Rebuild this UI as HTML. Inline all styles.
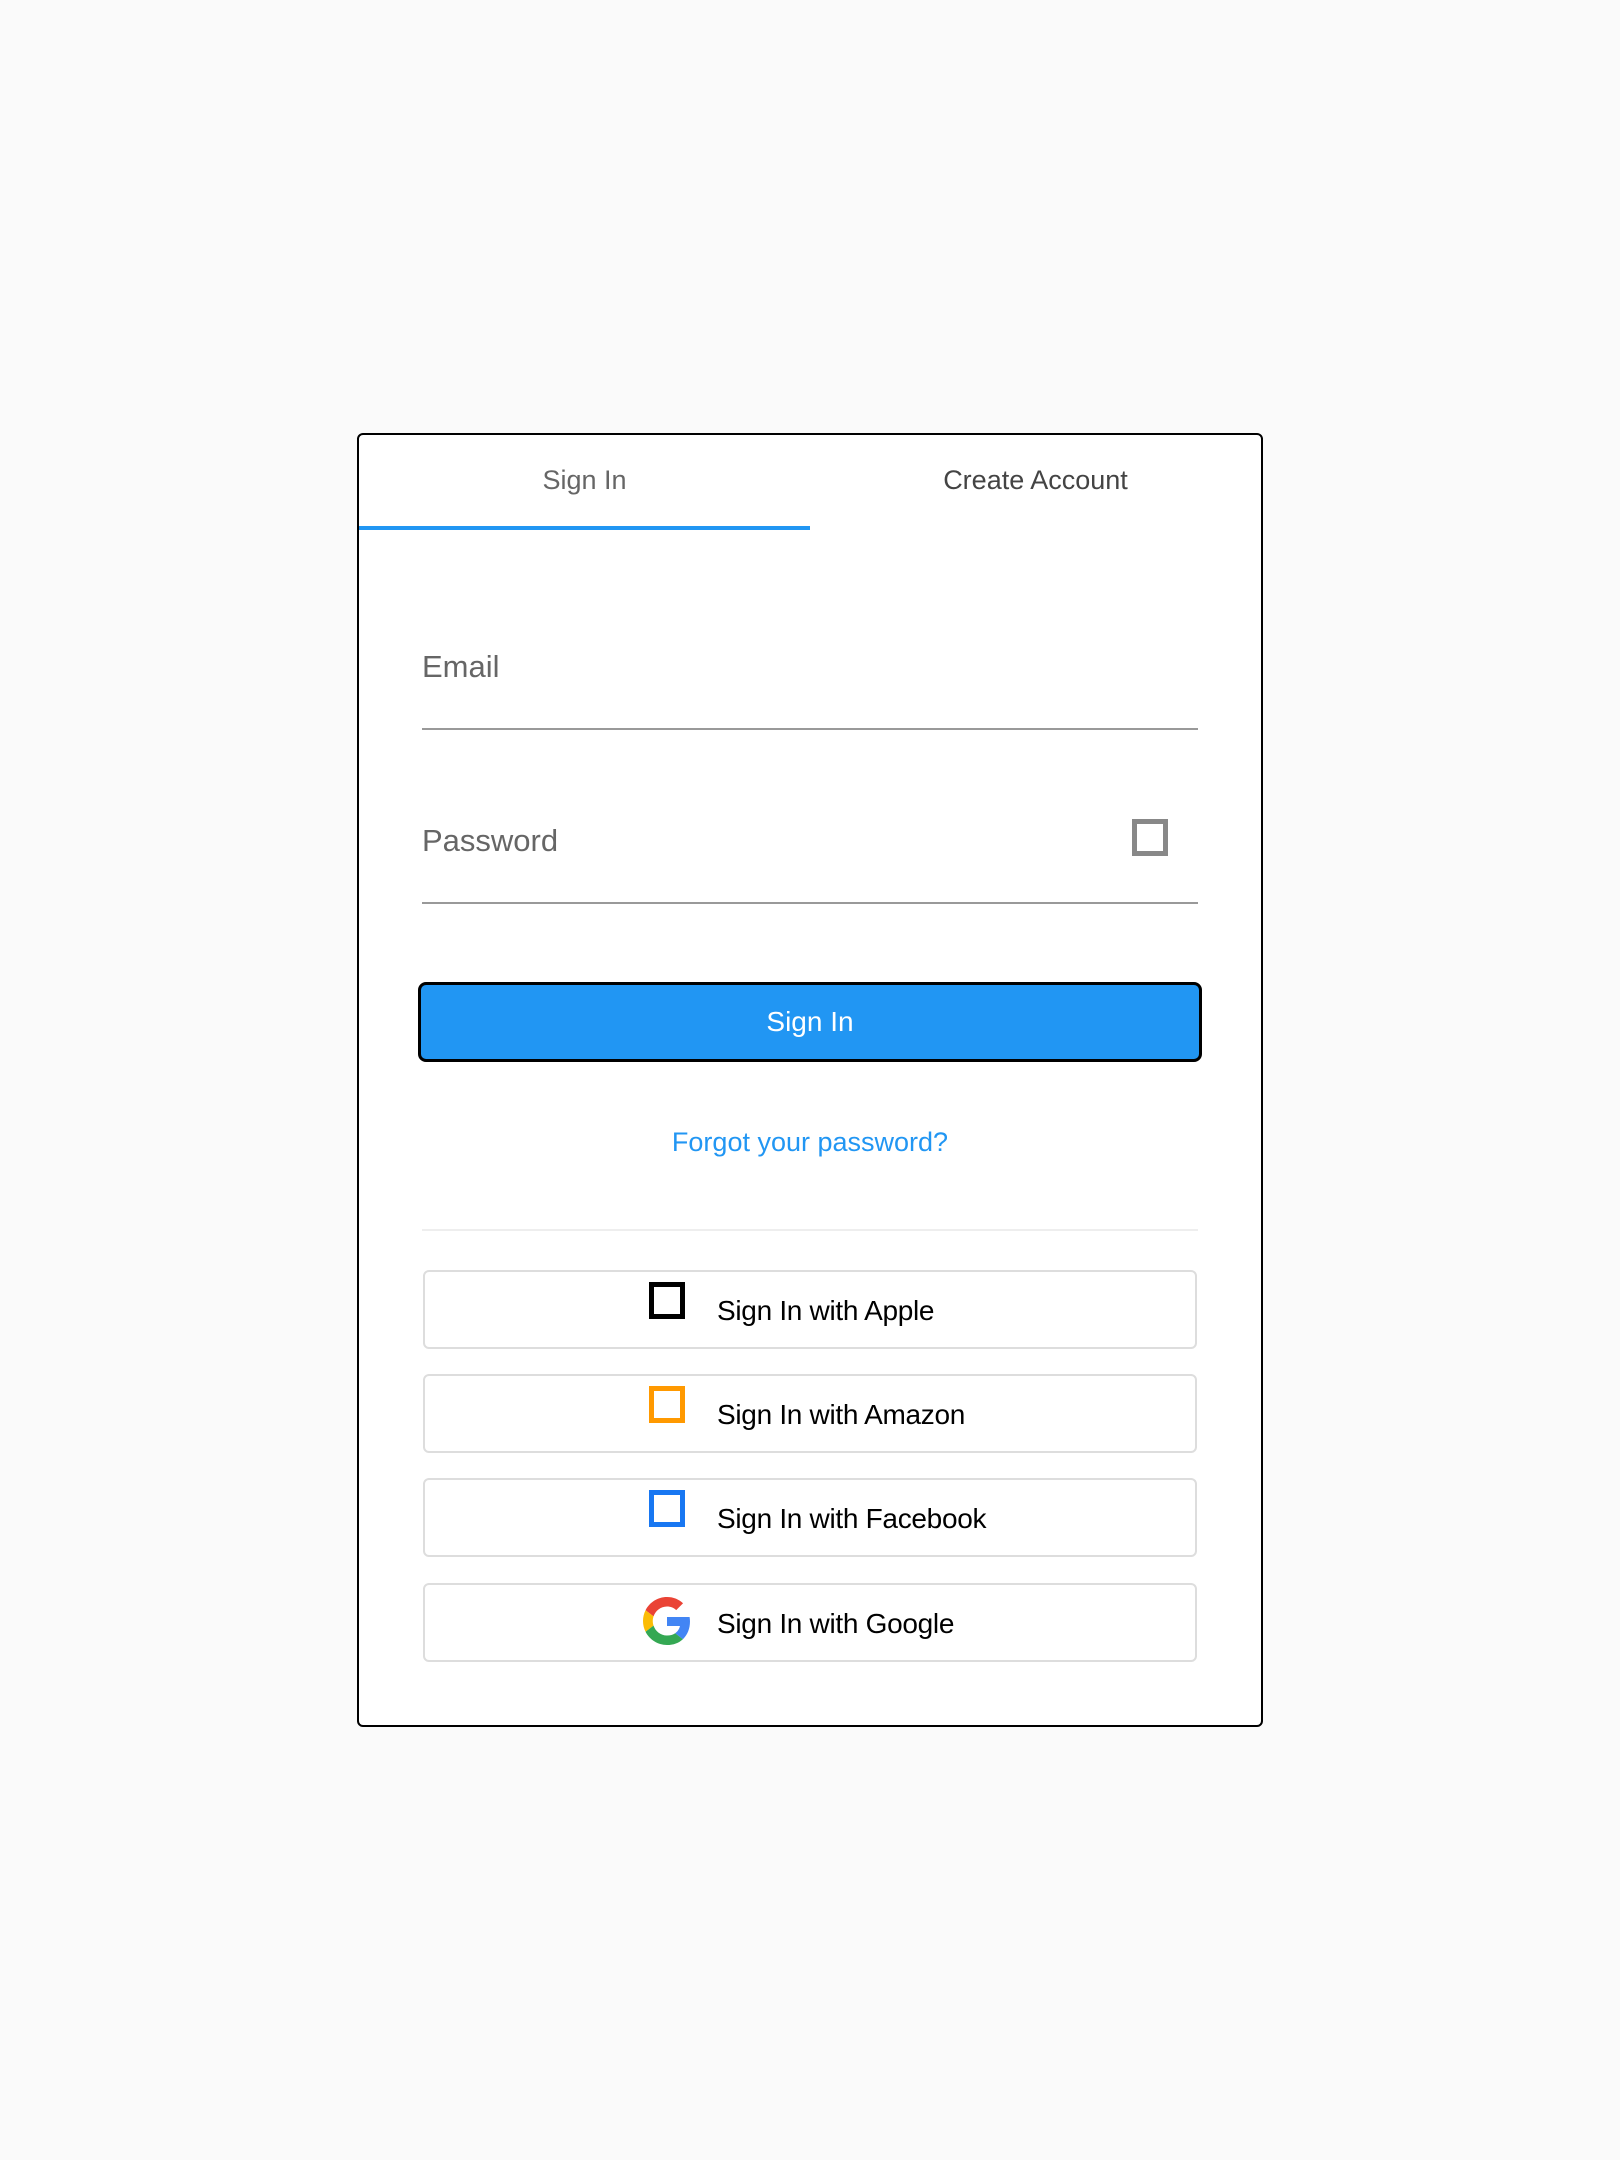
<!DOCTYPE html>
<html><head><meta charset="utf-8"><style>
*{box-sizing:border-box;margin:0;padding:0}
body{width:1620px;height:2160px;background:#fafafa;position:relative;font-family:"Liberation Sans",Arial,sans-serif;overflow:hidden}
.card{position:absolute;left:357px;top:433px;width:906px;height:1294px;background:#fff;border:2px solid #000;border-radius:6px}
.abs{position:absolute}
.tab{position:absolute;top:29px;width:451px;text-align:center;font-size:27px;line-height:32px}
.label{position:absolute;left:63px;font-size:31px;color:#666;line-height:36px}
.line{position:absolute;left:63px;width:776px;height:2px;background:#999}
.sbtn{position:absolute;left:64px;width:774px;height:79px;border:2px solid #ddd;border-radius:6px;background:#fff}
.sbtn .t{position:absolute;left:292px;top:22px;font-size:28px;line-height:34px;color:#000;letter-spacing:-0.3px}
.sbtn .ic{position:absolute;left:224px;top:10px;width:36px;height:37px;border:5px solid #000}
</style></head><body>
<div class="card">
 <div class="tab" style="left:0;color:#666">Sign In</div>
 <div class="tab" style="left:451px;color:#444">Create Account</div>
 <div class="abs" style="left:0;top:91px;width:451px;height:4px;background:#2196f3"></div>

 <div class="label" style="top:214px">Email</div>
 <div class="line" style="top:293px"></div>
 <div class="label" style="top:388px">Password</div>
 <div class="abs" style="left:773px;top:384px;width:36px;height:37px;border:5px solid #888"></div>
 <div class="line" style="top:467px"></div>

 <div class="abs" style="left:59px;top:547px;width:784px;height:80px;background:#2196f3;border:3px solid #000;border-radius:8px;color:#fff;font-size:28px;text-align:center;line-height:74px">Sign In</div>

 <div class="abs" style="left:0;top:690px;width:902px;text-align:center;color:#2196f3;font-size:27px;line-height:34px">Forgot your password?</div>

 <div class="abs" style="left:63px;top:794px;width:776px;height:2px;background:#eee"></div>

 <div class="sbtn" style="top:835px"><div class="ic" style="border-color:#000"></div><div class="t">Sign In with Apple</div></div>
 <div class="sbtn" style="top:939px"><div class="ic" style="border-color:#ff9900"></div><div class="t">Sign In with Amazon</div></div>
 <div class="sbtn" style="top:1043px"><div class="ic" style="border-color:#1877f2"></div><div class="t">Sign In with Facebook</div></div>
 <div class="sbtn" style="top:1148px">
  <svg style="position:absolute;left:218px;top:12px" width="48" height="48" viewBox="0 0 48 48">
   <path fill="#EA4335" d="M24 9.5c3.54 0 6.71 1.220 9.21 3.6l6.85-6.85C35.9 2.38 30.47 0 24 0 14.62 0 6.51 5.38 2.560 13.22l7.98 6.19C12.43 13.72 17.74 9.5 24 9.5z"/>
   <path fill="#4285F4" d="M46.98 24.55c0-1.57-.15-3.09-.38-4.55H24v9.02h12.94c-.58 2.96-2.26 5.48-4.78 7.18l7.73 6c4.51-4.18 7.09-10.36 7.09-17.65z"/>
   <path fill="#FBBC05" d="M10.53 28.59c-.48-1.45-.76-2.99-.76-4.59s.27-3.14.76-4.59l-7.98-6.19C.92 16.46 0 20.12 0 24c0 3.88.92 7.54 2.56 10.78l7.97-6.19z"/>
   <path fill="#34A853" d="M24 48c6.48 0 11.93-2.13 15.89-5.81l-7.73-6c-2.15 1.45-4.92 2.3-8.16 2.3-6.26 0-11.57-4.22-13.47-9.91l-7.98 6.190C6.51 42.62 14.62 48 24 48z"/>
  </svg>
  <div class="t">Sign In with Google</div></div>
</div>
</body></html>
